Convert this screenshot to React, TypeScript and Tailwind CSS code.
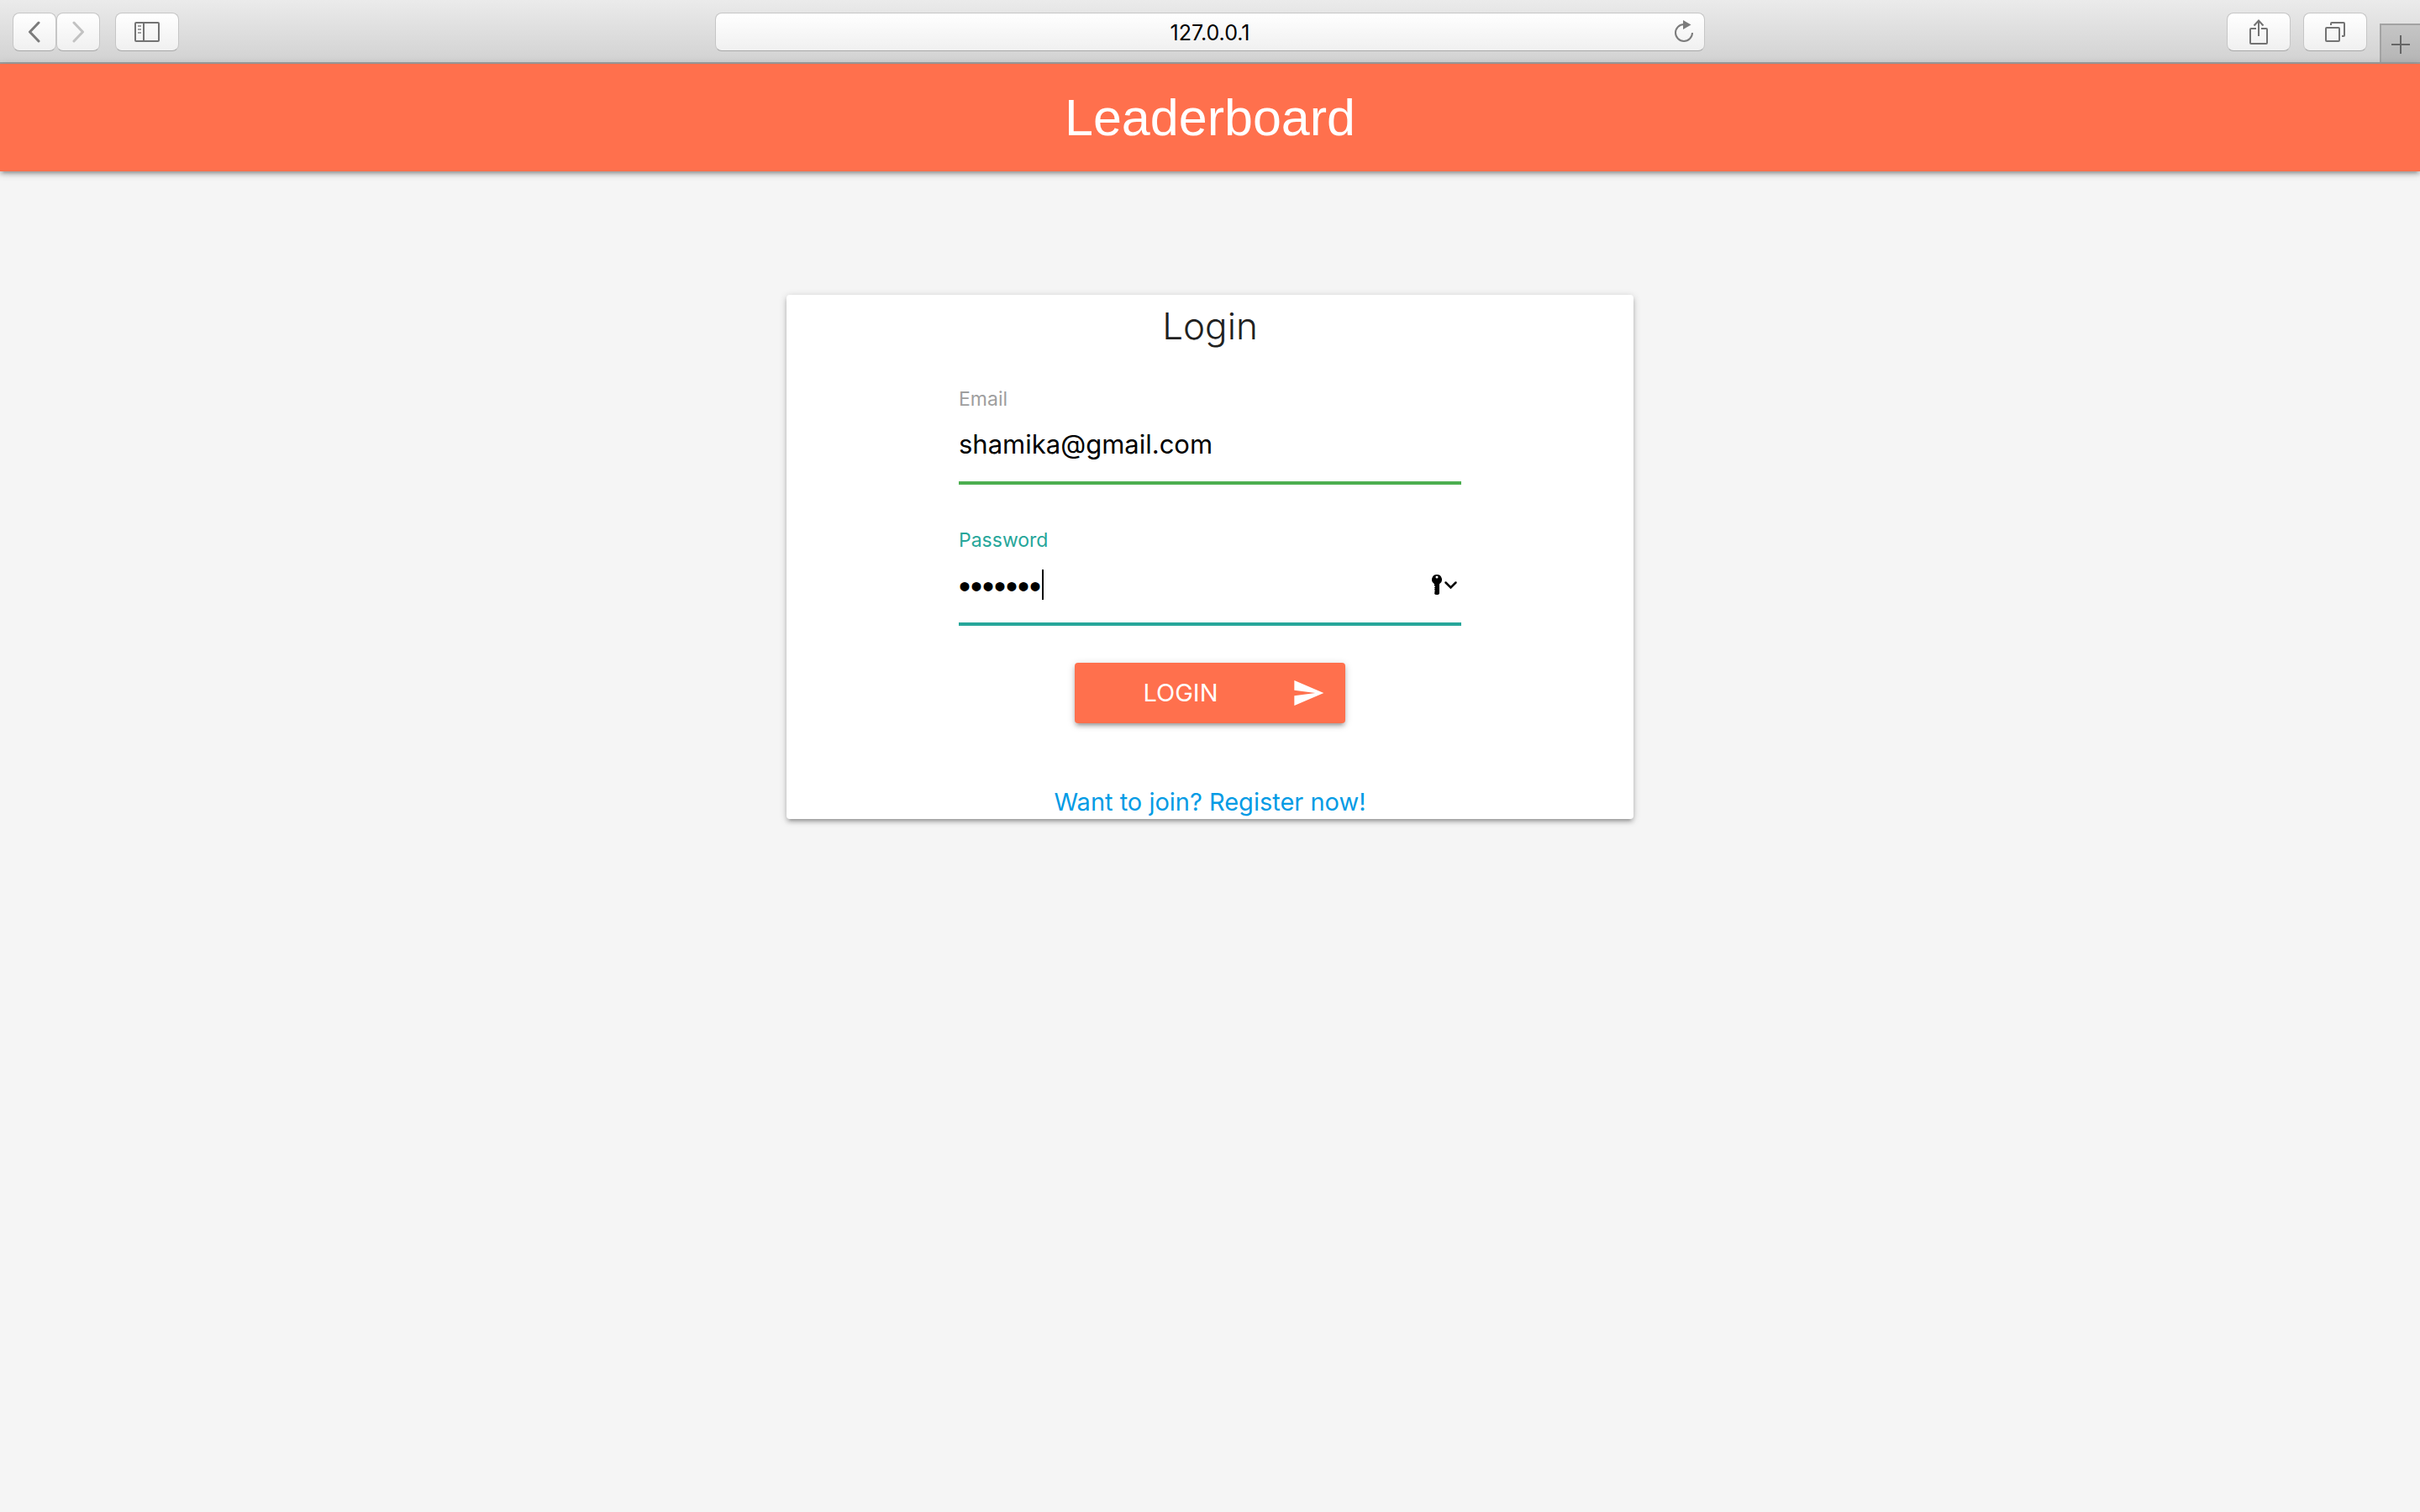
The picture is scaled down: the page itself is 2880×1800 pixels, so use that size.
import { useState } from "react";
import type { ReactNode } from "react";

const toolbarButton =
  "flex h-[46px] items-center justify-center rounded-[8px] border border-[#c6c6c6] border-b-[#a8a8a8] bg-linear-to-b from-white to-[#f0f0f0]";

const raised =
  "shadow-[0_4px_4px_0_rgba(0,0,0,0.14),0_6px_2px_-4px_rgba(0,0,0,0.12),0_2px_10px_0_rgba(0,0,0,0.2)]";

function ToolbarButton({
  label,
  narrow = false,
  children,
}: {
  label: string;
  narrow?: boolean;
  children: ReactNode;
}) {
  return (
    <button
      type="button"
      aria-label={label}
      className={`${toolbarButton} ${narrow ? "w-[52px]" : "w-[76px]"}`}
    >
      {children}
    </button>
  );
}

function BackIcon() {
  return (
    <svg width="16" height="26" viewBox="0 0 16 26" fill="none" stroke="#7b7b7b" strokeWidth="3" strokeLinecap="round" strokeLinejoin="round">
      <path d="M13 2 2.500 13 13 24" />
    </svg>
  );
}

function ForwardIcon() {
  return (
    <svg width="16" height="26" viewBox="0 0 16 26" fill="none" stroke="#c2c2c2" strokeWidth="3" strokeLinecap="round" strokeLinejoin="round">
      <path d="M3 2 13.500 13 3 24" />
    </svg>
  );
}

function SidebarIcon() {
  return (
    <svg width="30" height="24" viewBox="0 0 30 24" fill="none">
      <rect x="1" y="1" width="28" height="22" rx="1" stroke="#737373" strokeWidth="2" />
      <path d="M11 1v22" stroke="#737373" strokeWidth="2" />
      <path d="M4 5h4M4 9h4M4 13h4" stroke="#a0a0a0" strokeWidth="2" />
    </svg>
  );
}

function ReloadIcon() {
  return (
    <svg width="24" height="28" viewBox="0 0 24 28" fill="none">
      <path d="M22 15a10 10 0 1 1-10-10" stroke="#7b7b7b" strokeWidth="2" />
      <path d="M11 0 20.500 5.500 11 11z" fill="#7b7b7b" />
    </svg>
  );
}

function ShareIcon() {
  return (
    <svg width="22" height="32" viewBox="0 0 22 32" fill="none" stroke="#737373" strokeWidth="2">
      <path d="M8 12H2q-1 0-1 1v16q0 1 1 1h18q1 0 1-1V13q0-1-1-1h-6" />
      <path d="M11 21V2M5.500 8.500 11 2.500l5.500 6" />
    </svg>
  );
}

function TabsIcon() {
  return (
    <svg width="24" height="24" viewBox="0 0 24 24" fill="none" stroke="#737373" strokeWidth="2">
      <rect x="1" y="7" width="16" height="16" rx="1" />
      <path d="M7 4V2q0-1 1-1h14q1 0 1 1v14q0 1-1 1h-2" />
    </svg>
  );
}

function PlusIcon() {
  return (
    <svg width="22" height="22" viewBox="0 0 22 22" stroke="#666666" strokeWidth="2">
      <path d="M11 0v22M0 11h22" />
    </svg>
  );
}

function KeyIcon() {
  return (
    <svg width="31" height="24" viewBox="0 0 31 24" fill="none">
      <path
        fill="#000"
        fillRule="evenodd"
        d="M6 0a6 6 0 0 0-3 11.200V22q0 2 3 2t3-2V11.200A6 6 0 0 0 6 0zm0 1.500a1.500 1.500 0 1 1 0 3 1.500 1.500 0 0 1 0-3z"
      />
      <path d="M3.500 14v8" stroke="#fff" strokeWidth="1" strokeDasharray="1 1.500" />
      <path d="M16.500 9.500 22.500 15.500 28.500 9.500" stroke="#000" strokeWidth="2.500" strokeLinecap="round" />
    </svg>
  );
}

function SendIcon() {
  return (
    <svg width="40" height="40" viewBox="0 0 24 24" fill="currentColor">
      <path d="M2.010 21 23 12 2.010 3 2 10l15 2-15 2z" />
    </svg>
  );
}

function BrowserToolbar() {
  return (
    <div className="grid h-[76px] grid-cols-[1fr_minmax(0,1178px)_1fr] border-b-2 border-[#9d9d9d] bg-linear-to-b from-[#ebebeb] to-[#d2d2d2]">
      <nav className="flex items-start pt-[15px] pl-[15px]">
        <ToolbarButton label="Back" narrow>
          <BackIcon />
        </ToolbarButton>
        <ToolbarButton label="Forward" narrow>
          <ForwardIcon />
        </ToolbarButton>
        <div className="pl-[18px]">
          <ToolbarButton label="Show sidebar">
            <SidebarIcon />
          </ToolbarButton>
        </div>
      </nav>
      <div className="pt-[15px]">
        <div className={`${toolbarButton} pr-3 pl-9`}>
          <input
            aria-label="Address"
            defaultValue="127.0.0.1"
            className="min-w-0 flex-1 bg-transparent pt-0.5 text-center text-[25px] leading-8 text-black outline-none"
          />
          <button type="button" aria-label="Reload">
            <ReloadIcon />
          </button>
        </div>
      </div>
      <div className="flex items-start justify-end gap-[15px] pt-[15px]">
        <ToolbarButton label="Share">
          <ShareIcon />
        </ToolbarButton>
        <ToolbarButton label="Show all tabs">
          <TabsIcon />
        </ToolbarButton>
        <button
          type="button"
          aria-label="New tab"
          className="mt-[13px] flex h-[46px] w-12 items-center justify-center border-t-2 border-l-2 border-[#a3a3a3] bg-linear-to-b from-[#c5c5c5] to-[#b5b5b5] pt-0.5"
        >
          <PlusIcon />
        </button>
      </div>
    </div>
  );
}

export default function App() {
  const [email, setEmail] = useState("shamika@gmail.com");
  const [password, setPassword] = useState("leaders");

  return (
    <div className="flex min-h-screen flex-col bg-[#f5f5f5] font-['Inter',sans-serif]">
      <BrowserToolbar />
      <header className={`flex h-32 items-center justify-center bg-[#ff704d] ${raised}`}>
        <h1 className="font-['Liberation_Sans',sans-serif] text-[61px] leading-[72px] text-white">
          Leaderboard
        </h1>
      </header>
      <main className="flex justify-center pt-[147px]">
        <section className={`w-[35%] rounded-[4px] bg-white px-[205px] ${raised}`}>
          <form onSubmit={(e) => e.preventDefault()} className="flex flex-col">
            <h2 className="pt-[7px] pb-px text-center text-[44px] leading-[60px] font-light text-[#212121]">Login</h2>
            <label htmlFor="email" className="mt-10 text-[23px] leading-8 text-[#9e9e9e]">
              Email
            </label>
            <input
              id="email"
              type="email"
              value={email}
              onChange={(e) => setEmail(e.target.value)}
              className="h-[86px] border-b-4 border-[#4caf50] pb-2 text-[31px] leading-10 text-black outline-none"
            />
            <label htmlFor="password" className="mt-[50px] text-[23px] leading-8 text-[#26a69a]">
              Password
            </label>
            <div className="relative flex h-[86px] items-center border-b-4 border-[#26a69a] pr-1 pb-[5px]">
              <input
                id="password"
                type="password"
                value={password}
                onChange={(e) => setPassword(e.target.value)}
                className="min-w-0 flex-1 pt-0.5 font-['Liberation_Sans',sans-serif] text-[40px] leading-10 text-black caret-transparent outline-none"
              />
              <span className="absolute top-[19px] left-[99px] h-9 w-0.5 bg-black" />
              <button type="button" aria-label="Fill saved password" className="pb-1">
                <KeyIcon />
              </button>
            </div>
            <button
              type="submit"
              className={`mt-11 flex h-[72px] w-[322px] items-center self-center rounded-[4px] bg-[#ff704d] pr-6 text-[29px] leading-9 text-white ${raised}`}
            >
              <span className="flex-1 pr-[6px] text-center">LOGIN</span>
              <SendIcon />
            </button>
            <a href="#register" className="mt-[74px] text-center text-[29px] leading-10 text-[#039be5]">
              Want to join? Register now!
            </a>
          </form>
        </section>
      </main>
    </div>
  );
}
